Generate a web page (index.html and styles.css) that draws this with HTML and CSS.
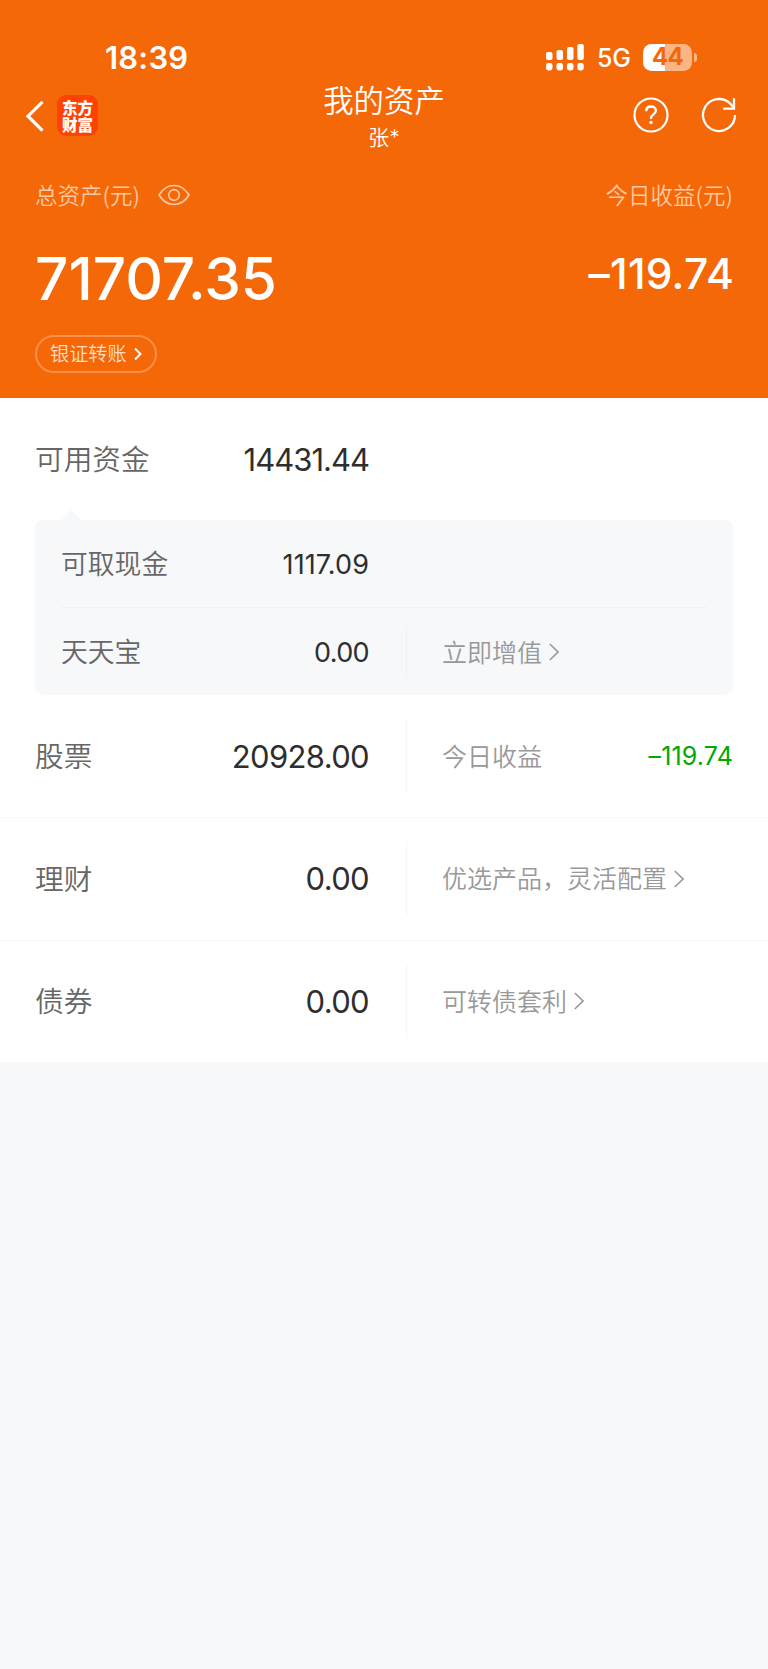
FILE: index.html
```html
<!DOCTYPE html>
<html lang="zh-CN">
<head>
<meta charset="utf-8">
<title>我的资产</title>
<link rel="stylesheet" href="styles.css">
</head>
<body>
<header class="hero">
  <div class="status">
    <span class="time">18:39</span>
    <div class="status-right">
      <svg class="signal" width="38" height="27" viewBox="0 0 38 27" fill="#fff">
        <rect x="0" y="8" width="6.5" height="8" rx="2"/><rect x="10.5" y="6" width="6.5" height="10" rx="2"/><rect x="21" y="3" width="6.5" height="13" rx="2"/><rect x="31.3" y="0" width="6.5" height="16" rx="2"/>
        <rect x="0" y="19" width="6.5" height="7.5" rx="2.4"/><rect x="10.5" y="19" width="6.5" height="7.5" rx="2.4"/><rect x="21" y="19" width="6.5" height="7.5" rx="2.4"/><rect x="31.3" y="19" width="6.5" height="7.5" rx="2.4"/>
      </svg>
      <span class="network">5G</span>
      <div class="battery"><span class="battery-body">44</span><i class="battery-cap"></i></div>
    </div>
  </div>
  <nav class="nav">
    <div class="nav-left">
      <svg width="20" height="32" viewBox="0 0 20 32" fill="none" stroke="#fff" stroke-width="3.2"><path d="M17.5 1.800 3 16.200 17.5 30.600"/></svg>
      <span class="logo"><span>东方<br>财富</span></span>
    </div>
    <div class="nav-title"><h1>我的资产</h1><p>张*</p></div>
    <div class="nav-right">
      <svg width="36" height="36" viewBox="0 0 36 36" fill="none" stroke="#fff" stroke-width="2.2"><circle cx="18" cy="18" r="16.500"/><path d="M13.2 14.2c0-2.900 2-4.700 4.900-4.700 2.800 0 4.800 1.700 4.800 4.100 0 3.800-4.900 3.900-4.900 7.600v.9" stroke-width="2.3"/><circle cx="18" cy="25.4" r="1.700" fill="#fff" stroke="none"/></svg>
      <svg width="36" height="36" viewBox="0 0 36 36" fill="none" stroke="#fff" stroke-width="2.3"><path d="M34 18A16 16 0 1 1 29.300 6.700L33 10.800"/><path d="M33 1.200V11.600H22.200"/></svg>
    </div>
  </nav>
  <div class="captions">
    <div class="caption-left"><span>总资产(元)</span>
      <svg width="32" height="22" viewBox="0 0 32 22" fill="none" stroke="#fcc9a4" stroke-width="1.7"><path d="M1 11C5 4.5 10 1.5 16 1.5S27 4.5 31 11C27 17.500 22 20.500 16 20.500S5 17.500 1 11Z"/><circle cx="16" cy="11" r="5.300"/></svg>
    </div>
    <span>今日收益(元)</span>
  </div>
  <div class="totals"><strong class="total">71707.35</strong><span class="profit">–119.74</span></div>
  <a class="transfer"><span>银证转账</span><svg width="8" height="14" viewBox="0 0 8 14" fill="none" stroke="#fff" stroke-width="2"><path d="M1 1.500 6.500 7 1 12.500"/></svg></a>
</header>
<main class="panel">
  <section class="row row-cash"><span class="name">可用资金</span><span class="amount tight">14431.44</span></section>
  <section class="card">
    <div class="sub"><span class="name">可取现金</span><span class="amount ones">1117.09</span></div>
    <div class="sub sub-last"><span class="name">天天宝</span><span class="amount">0.00</span>
      <div class="more"><span class="text">立即增值</span><svg width="10" height="18" viewBox="0 0 10 18"><path d="M.8 1 9 9 .8 17"/></svg></div></div>
  </section>
  <section class="row row-stock"><span class="name">股票</span><span class="amount">20928.00</span>
    <div class="more"><span class="text">今日收益</span><span class="loss">–119.74</span></div></section>
  <section class="row"><span class="name">理财</span><span class="amount">0.00</span>
    <div class="more"><span class="text">优选产品，灵活配置</span><svg width="10" height="18" viewBox="0 0 10 18"><path d="M.8 1 9 9 .8 17"/></svg></div></section>
  <section class="row"><span class="name">债券</span><span class="amount">0.00</span>
    <div class="more"><span class="text">可转债套利</span><svg width="10" height="18" viewBox="0 0 10 18"><path d="M.8 1 9 9 .8 17"/></svg></div></section>
</main>
</body>
</html>
```
FILE: styles.css
```css
* { box-sizing: border-box; margin: 0; padding: 0; }
body { width: 768px; min-height: 1669px; background: #f6f8fa; font-family: Inter, "Noto Sans CJK SC", sans-serif; font-weight: 350; }
svg { display: block; flex: none; }
span, strong, h1, p { white-space: nowrap; }

.hero { height: 398px; padding: 37px 36px 0; background: #f56808; color: #fff; }
.status { height: 40px; display: flex; justify-content: space-between; align-items: center; padding: 0 35px 0 69px; }
.time { font-size: 31px; font-weight: 600; letter-spacing: .2px; }
.status-right { display: flex; align-items: center; }
.signal { margin-right: 13px; }
.network { width: 46px; padding-top: 1px; font-size: 25px; font-weight: 500; letter-spacing: -.2px; }
.battery { display: flex; align-items: center; }
.battery-body { width: 49px; height: 27px; border-radius: 8.500px; background: linear-gradient(90deg, #fff 44%, #fbb484 44%); color: #f56808; font-size: 24px; font-weight: 700; letter-spacing: -.8px; line-height: 26px; text-align: center; }
.battery-cap { width: 3px; height: 9px; margin-left: 2px; border-radius: 0 4px 4px 0; background: #fbb484; }

.nav { height: 77px; display: grid; grid-template-columns: 1fr auto 1fr; align-items: center; }
.nav-left { display: flex; align-items: center; gap: 12px; margin: -1px 0 0 -11px; }
.logo { width: 41px; height: 41px; border-radius: 9px; background: #ff4200; display: flex; justify-content: center; align-items: center; font: 900 15.500px/17px "Noto Sans CJK SC", sans-serif; }
.nav-title { display: flex; flex-direction: column; align-items: center; padding-top: 4px; }
.nav-title h1 { font-size: 30.400px; font-weight: 350; line-height: 40px; }
.nav-title p { font-size: 21px; line-height: 34px; }
.nav-right { display: flex; justify-content: flex-end; gap: 32px; margin-right: -5px; padding-bottom: 2px; }

.captions { height: 82px; display: flex; justify-content: space-between; align-items: center; color: #fcc9a4; font-family: "Noto Sans CJK SC", sans-serif; font-size: 22.500px; }
.captions span { margin: -3px -1px 0; }
.caption-left { display: flex; align-items: center; gap: 19px; }
.totals { height: 99px; display: flex; justify-content: space-between; align-items: flex-start; padding-top: 7px; }
.total { margin-left: -1px; font-size: 58.500px; font-weight: 500; line-height: 72px; }
.profit { margin-right: -2px; font-size: 42.500px; font-weight: 500; line-height: 62px; letter-spacing: .2px; }
.transfer { width: 122px; height: 38px; margin-left: -1px; border: 2px solid #f9904a; border-radius: 19px; display: flex; align-items: center; gap: 7px; padding-left: 13px; color: #fddcc5; font-size: 19.200px; }
.transfer span { margin-top: -2px; }

.panel { background: #fff; height: 664px; }
.row { height: 122.500px; padding: 0 36px 0 35px; display: grid; grid-template-columns: 150px 184px 1fr; align-items: center; border-bottom: 1.500px solid #f8f8f9; }
.row-stock { height: 123px; }
.row:last-child { height: 121.500px; border-bottom: 0; }
.row-cash { height: 122px; border: 0; }
.name { margin-top: -3px; color: #666; font-size: 28.700px; }
.amount { color: #2e2e2e; font-size: 31px; font-weight: 400; text-align: right; letter-spacing: -.650px; }
.tight { letter-spacing: -1px; }
.more { height: 73px; margin-left: 36.500px; padding-left: 35.500px; border-left: 1.500px solid #f6f6f7; display: flex; align-items: center; color: #999; font-size: 25px; gap: 7px; }
.more svg { fill: none; stroke: #999; stroke-width: 1.600; }
.text { margin-top: -3px; }
.loss { margin-left: auto; margin-right: -1px; color: #00a800; font-weight: 400; letter-spacing: .15px; }

.card { position: relative; height: 175px; margin: 0 35px; padding: 0 26px; background: #f6f8fa; border-radius: 9px; }
.card::before { content: ""; position: absolute; left: 26px; top: -10px; border: 10.500px solid transparent; border-top: 0; border-bottom-color: #f6f8fa; }
.sub { height: 88px; padding-top: 1px; display: grid; grid-template-columns: 125px 183px 1fr; align-items: center; border-bottom: 1.500px solid #eff1f3; }
.sub-last { height: 87px; border: 0; }
.sub .name { font-size: 26.800px; }
.sub .amount { font-size: 27px; }
.sub .ones { letter-spacing: .1px; }
.sub .more { height: 52px; border-color: #eef0f2; }
```
